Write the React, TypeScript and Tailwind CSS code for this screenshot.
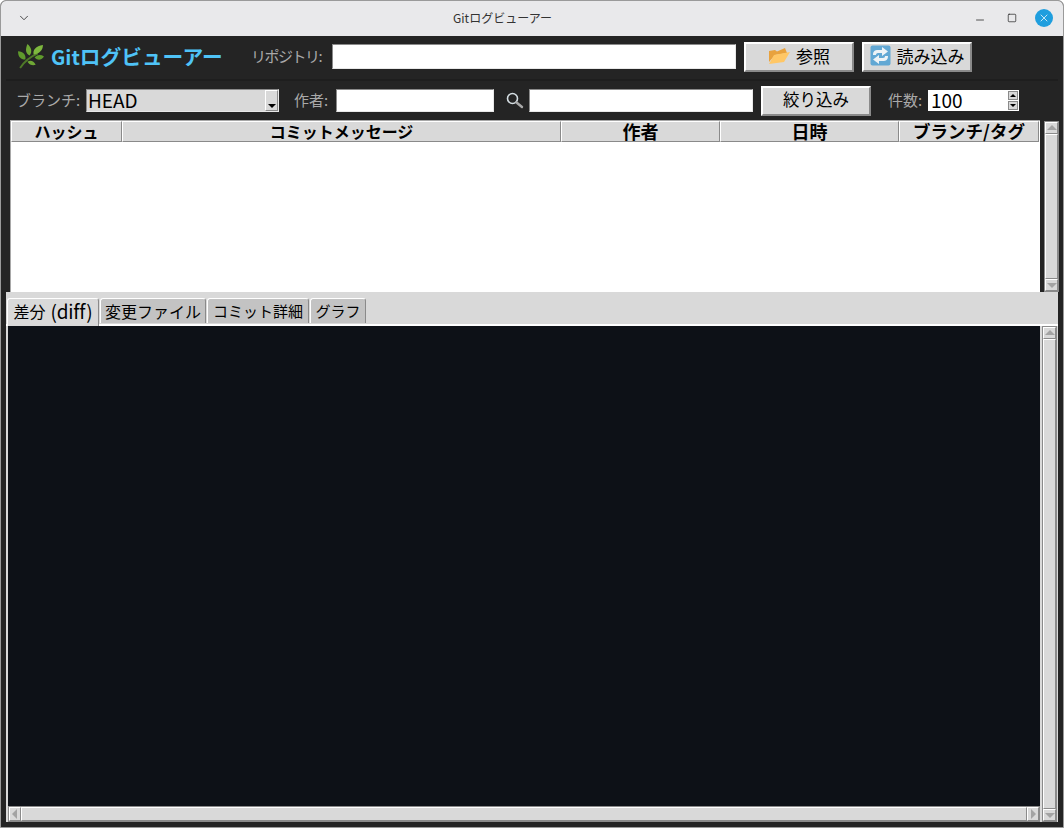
import React from 'react';
import { ChevronDown, Minus, Square, X } from 'lucide-react';

const bevel = 'border-2 border-t-white border-l-white border-r-[#8a8a8a] border-b-[#8a8a8a]';
const thinBevel = 'border border-t-white border-l-white border-r-[#8a8a8a] border-b-[#8a8a8a]';
const sunken = 'border border-t-[#8a8a8a] border-l-[#8a8a8a] border-r-[#e8e8e8] border-b-[#e8e8e8] bg-white';

function HerbIcon() {
  return (
    <svg width="27" height="25" viewBox="0 0 26 24">
      <path d="M3 23 C7 17 11 13 20 9" stroke="#4f7a28" strokeWidth="1.8" fill="none" />
      <path d="M8 15 C3 15 1 12 1 7 C6 7 9 11 8 15Z" fill="#5f9a2c" />
      <path d="M12 11 C8 9 8 5 10 0 C14 3 15 8 12 11Z" fill="#6fa835" />
      <path d="M16 10 C15 6 18 2 25 1 C25 6 21 10 16 10Z" fill="#7eb83e" />
      <path d="M17 13 C20 10 23 10 26 12 C23 16 20 16 17 13Z" fill="#5f9a2c" />
      <path d="M10 17 C13 15 16 16 18 20 C15 21 12 20 10 17Z" fill="#6fa835" />
    </svg>
  );
}

function FolderIcon() {
  return (
    <svg width="22" height="19" viewBox="0 0 22 19">
      <path d="M1 16 L1 5 L7 4 L9 5.5 L17 2 L19 7 L7 9Z" fill="#e8a23e" />
      <path d="M1 18 L6 9 L22 6 L16 16Z" fill="#ffc766" />
    </svg>
  );
}

function RefreshIcon() {
  return (
    <svg width="21" height="21" viewBox="0 0 21 21">
      <rect x="0.5" y="0.5" width="20" height="20" rx="2" fill="#62a8d4" />
      <path d="M3 10 C3 6 5 5 8 5 L12 5 L12 2 L18 6.5 L12 11 L12 8 L8 8 C6.5 8 6 9 6 10Z" fill="#eef3f6" />
      <path d="M18 11 C18 15 16 16 13 16 L9 16 L9 19 L3 14.5 L9 10 L9 13 L13 13 C14.5 13 15 12 15 11Z" fill="#eef3f6" />
    </svg>
  );
}

function SearchIcon() {
  return (
    <svg width="19" height="19" viewBox="0 0 19 19" fill="none">
      <circle cx="7.5" cy="7.5" r="5" stroke="#d4dde2" strokeWidth="1.6" />
      <path d="M11.5 11.5 L17 16" stroke="#a8a8a8" strokeWidth="2.4" strokeLinecap="round" />
    </svg>
  );
}

function Arrow({ dir }: { dir: 'up' | 'down' | 'left' | 'right' }) {
  const points = {
    up: '1,8 6,3 11,8',
    down: '1,4 11,4 6,9',
    left: '8,1 8,11 3,6',
    right: '4,1 4,11 9,6',
  }[dir];
  return (
    <svg width="12" height="12" viewBox="0 0 12 12" className="shrink-0">
      <polygon points={points} fill="#a3a3a3" />
    </svg>
  );
}

function ScrollButton({ dir }: { dir: 'up' | 'down' | 'left' | 'right' }) {
  const size = dir === 'up' || dir === 'down' ? 'w-full h-[12px]' : 'h-full w-[12px]';
  return (
    <div className={`${thinBevel} ${size} shrink-0 bg-[#d9d9d9] flex items-center justify-center overflow-hidden`}>
      <Arrow dir={dir} />
    </div>
  );
}

function VScroll() {
  return (
    <div className="w-[15px] h-full flex flex-col bg-[#d9d9d9] border border-[#8a8a8a]">
      <ScrollButton dir="up" />
      <div className={`${thinBevel} flex-1`} />
      <ScrollButton dir="down" />
    </div>
  );
}

function Label({ children, tight }: { children: React.ReactNode; tight?: boolean }) {
  return (
    <span className={`block pb-[2px] text-[15px] leading-none text-[#a9a9a9] whitespace-nowrap ${tight ? 'tracking-[-1.5px]' : ''}`}>
      {children}
    </span>
  );
}

function Button({ width, height, textSize, children }: { width: string; height: string; textSize: string; children: React.ReactNode }) {
  return (
    <div className={`${bevel} ${width} ${height} ${textSize} bg-[#d9d9d9] flex items-center justify-center gap-[6px] pb-[2px] leading-none text-black whitespace-nowrap`}>
      {children}
    </div>
  );
}

const columns = [
  { title: 'ハッシュ', width: 'w-[111px]', size: 'text-[16px]' },
  { title: 'コミットメッセージ', width: 'w-[439px]', size: 'text-[16px]' },
  { title: '作者', width: 'w-[159px]', size: 'text-[18px]' },
  { title: '日時', width: 'w-[179px]', size: 'text-[18px]' },
  { title: 'ブランチ/タグ', width: 'w-[140px]', size: 'text-[17.5px]' },
];

const tabs = [
  { title: '変更ファイル', width: 'w-[106px]', size: 'text-[16px]' },
  { title: 'コミット詳細', width: 'w-[102px]', size: 'text-[15px]' },
  { title: 'グラフ', width: 'w-[56px]', size: 'text-[15px]' },
];

export default function App() {
  return (
    <div
      className="w-[1064px] h-[828px] flex flex-col overflow-hidden bg-[#242424] border border-[#9a9a9a] rounded-t-[6px]"
      style={{ fontFamily: '"Noto Sans CJK JP", "Noto Sans", sans-serif' }}
    >
      {/* title bar */}
      <div className="h-[35px] shrink-0 bg-[#e9e9eb] flex items-center pl-[16px] pr-[10px] pb-[1px]">
        <ChevronDown size={14} strokeWidth={1.5} className="text-[#333]" />
        <div className="flex-1 text-center text-[12px] leading-none text-[#333]">Gitログビューアー</div>
        <div className="flex items-center">
          <Minus size={12} strokeWidth={1.5} className="text-[#222] mr-[21px] mt-1" />
          <Square size={10} strokeWidth={1.7} className="text-[#222] mr-[18px]" />
          <div className="w-[18px] h-[18px] rounded-full bg-[#1f9ede] flex items-center justify-center">
            <X size={12} strokeWidth={1.5} className="text-white" />
          </div>
        </div>
      </div>

      {/* repository row */}
      <div className="h-[43px] shrink-0 flex items-center pl-[16px] pb-[2px]">
        <HerbIcon />
        <span className="ml-[7px] w-[172px] pb-[1px] text-[20px] leading-none font-bold text-[#4fc3f7] whitespace-nowrap">
          Git<span className="text-[20.7px]">ログビューアー</span>
        </span>
        <span className="ml-[28px] w-[81px]"><Label tight>リポジトリ:</Label></span>
        <div className={`${sunken} w-[404px] h-[25px]`} />
        <div className="ml-[8px]">
          <Button width="w-[110px]" height="h-[30px]" textSize="text-[17px]"><FolderIcon />参照</Button>
        </div>
        <div className="ml-[8px]">
          <Button width="w-[110px]" height="h-[30px]" textSize="text-[17px]"><RefreshIcon />読み込み</Button>
        </div>
      </div>

      {/* filter row */}
      <div className="h-[41px] shrink-0 mx-[5px] flex items-center pl-[10px] border-t-2 border-[#1e1e1e]">
        <span className="w-[70px]"><Label>ブランチ:</Label></span>
        <div className={`${sunken} w-[193px] h-[23px] !bg-[#d9d9d9] flex items-center justify-between`}>
          <span className="pl-[1px] pb-[3px] text-[19px] leading-none text-black">HEAD</span>
          <div className={`${thinBevel} w-[13px] h-full flex items-end justify-center pb-[2px]`}>
            <svg width="8" height="4" viewBox="0 0 8 4"><polygon points="0,0 8,0 4,4" fill="#000" /></svg>
          </div>
        </div>
        <span className="ml-[15px] w-[42px]"><Label>作者:</Label></span>
        <div className={`${sunken} w-[158px] h-[23px]`} />
        <div className="ml-[11px] w-[24px]"><SearchIcon /></div>
        <div className={`${sunken} w-[224px] h-[23px]`} />
        <div className="ml-[8px]">
          <Button width="w-[110px]" height="h-[30px]" textSize="text-[16.5px]">絞り込み</Button>
        </div>
        <span className="ml-[17px] w-[40px]"><Label>件数:</Label></span>
        <div className="w-[91px] h-[21px] bg-white flex items-center justify-between pl-[3px] pr-[1px]">
          <span className="pb-[3px] text-[19px] leading-none text-black">100</span>
          <div className="flex flex-col gap-px">
            {[0, 1].map((i) => (
              <div key={i} className="w-[10px] h-[9px] bg-[#d9d9d9] border border-[#8a8a8a] flex items-center justify-center">
                <svg width="6" height="3" viewBox="0 0 6 3">
                  <polygon points={i === 0 ? '0,3 6,3 3,0' : '0,0 6,0 3,3'} fill="#000" />
                </svg>
              </div>
            ))}
          </div>
        </div>
      </div>

      {/* commit list */}
      <div className="h-[172px] shrink-0 flex pl-[9px] pr-[4px]">
        <div className="w-[1030px] bg-white border-l border-t border-[#a8a8a8] flex flex-col">
          <div className="flex h-[21px]">
            {columns.map((c) => (
              <div key={c.title} className={`${thinBevel} ${c.width} ${c.size} bg-[#d9d9d9] flex items-center justify-center pb-[2px] leading-none font-bold text-black whitespace-nowrap`}>
                {c.title}
              </div>
            ))}
          </div>
        </div>
        <div className="ml-[4px] pt-[1px]"><VScroll /></div>
      </div>

      {/* notebook */}
      <div className="flex-1 mx-[5px] mb-[5px] bg-[#d9d9d9] flex flex-col min-h-0">
        <div className="h-[34px] shrink-0 flex items-end pl-[1px] border-b-2 border-white gap-[1px]">
          <div className="w-[92px] h-[28px] -mb-[2px] bg-[#d9d9d9] border-t border-l border-r border-t-white border-l-white border-r-[#8a8a8a] rounded-t-[3px] flex items-center justify-center pb-[4px] text-[16px] leading-none text-black whitespace-nowrap">
            差分 <span className="ml-[5px] text-[19px] tracking-[-0.2px]">(diff)</span>
          </div>
          {tabs.map((t) => (
            <div key={t.title} className={`${t.width} ${t.size} h-[25px] mb-[1px] pb-[1px] bg-[#c3c3c3] border-t border-l border-r border-t-white border-l-white border-r-[#8a8a8a] rounded-t-[3px] flex items-center justify-center leading-none text-black whitespace-nowrap`}>
              {t.title}
            </div>
          ))}
        </div>
        <div className="flex-1 flex min-h-0 pl-[2px] pr-[1px]">
          <div className="flex-1 flex flex-col min-w-0">
            <div className="flex-1 bg-[#0d1117] min-h-0" />
            <div className="h-[16px] shrink-0 flex border border-[#8a8a8a]">
              <ScrollButton dir="left" />
              <div className={`${thinBevel} flex-1`} />
              <ScrollButton dir="right" />
            </div>
          </div>
          <div className="ml-[2px]"><VScroll /></div>
        </div>
      </div>
    </div>
  );
}
